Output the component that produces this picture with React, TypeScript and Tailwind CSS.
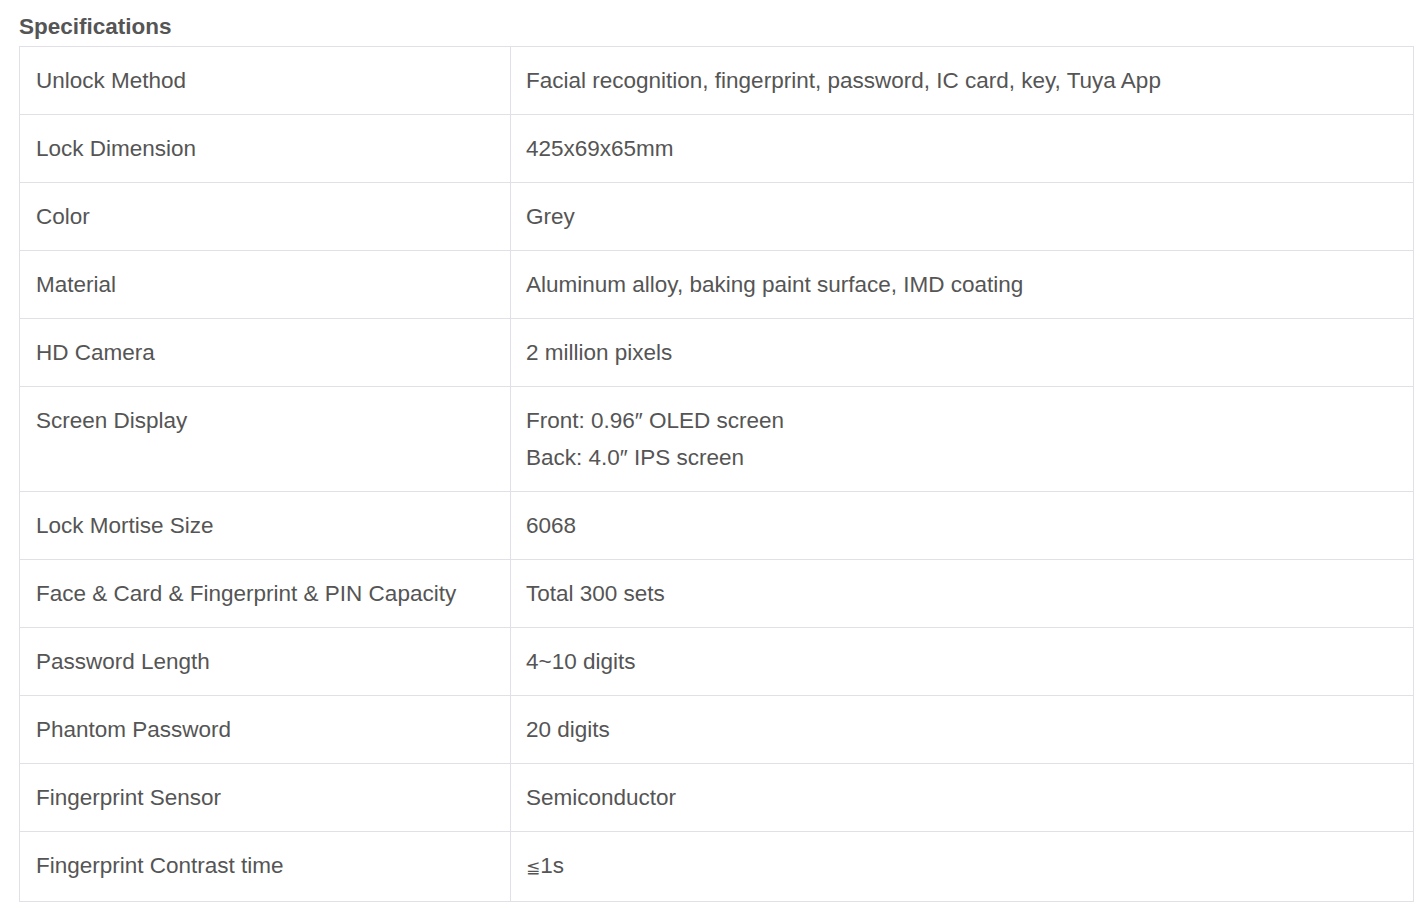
import React from 'react';

const specs: { label: string; value: React.ReactNode[] }[] = [
  { label: 'Unlock Method', value: ['Facial recognition, fingerprint, password, IC card, key, Tuya App'] },
  { label: 'Lock Dimension', value: ['425x69x65mm'] },
  { label: 'Color', value: ['Grey'] },
  { label: 'Material', value: ['Aluminum alloy, baking paint surface, IMD coating'] },
  { label: 'HD Camera', value: ['2 million pixels'] },
  { label: 'Screen Display', value: ['Front: 0.96\u2033 OLED screen', 'Back: 4.0\u2033 IPS screen'] },
  { label: 'Lock Mortise Size', value: ['6068'] },
  { label: 'Face & Card & Fingerprint & PIN Capacity', value: ['Total 300 sets'] },
  { label: 'Password Length', value: ['4~10 digits'] },
  { label: 'Phantom Password', value: ['20 digits'] },
  { label: 'Fingerprint Sensor', value: ['Semiconductor'] },
  {
    label: 'Fingerprint Contrast time',
    value: [
      <span key="le">
        <span className="text-[17px] font-['DejaVu_Sans',sans-serif]">{'\u2266'}</span>1s
      </span>,
    ],
  },
];

export default function App() {
  return (
    <div className="min-h-screen bg-white text-[#555] font-['Liberation_Sans',Arial,'DejaVu_Sans',sans-serif]">
      <div className="pl-[19px] pt-[12px]">
        <h2 className="text-[22.5px] leading-[30px] font-bold mb-[4px]">Specifications</h2>

        {/* Spec table */}
        <table className="w-[1395px] border-collapse text-[22.5px] leading-[37px]">
          <tbody>
            {specs.map((row) => (
              <tr key={row.label}>
                <td className="w-[491px] border border-[#e0e0e6] px-[16px] py-[15px] align-top">{row.label}</td>
                <td className="border border-[#e0e0e6] px-[15px] py-[15px] align-top">
                  {row.value.map((line, i) => (
                    <div key={i}>{line}</div>
                  ))}
                </td>
              </tr>
            ))}
            <tr>
              <td className="w-[491px] h-[67px] border border-[#e0e0e6]"></td>
              <td className="h-[67px] border border-[#e0e0e6]"></td>
            </tr>
          </tbody>
        </table>
      </div>
    </div>
  );
}
